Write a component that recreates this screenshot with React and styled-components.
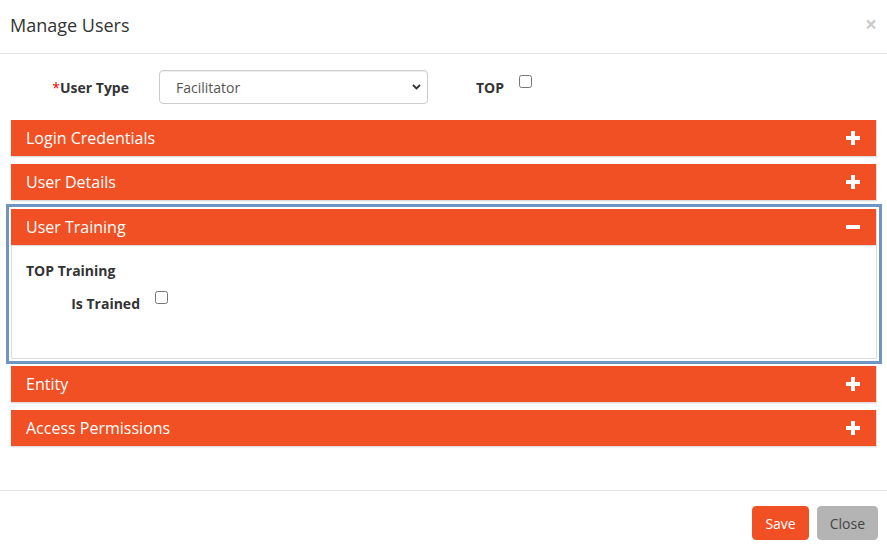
import styled, { createGlobalStyle } from "styled-components";

const ORANGE = "#f05023";

const GlobalStyle = createGlobalStyle`
  html, body {
    margin: 0;
    padding: 0;
    background: #fff;
  }
  body {
    font-family: "Open Sans", "Liberation Sans", sans-serif;
    font-size: 14px;
    color: #333;
  }
  * {
    box-sizing: border-box;
  }
`;

const Modal = styled.div`
  width: 887px;
  display: flex;
  flex-direction: column;
`;

const Header = styled.div`
  display: flex;
  justify-content: space-between;
  align-items: flex-start;
  padding: 12px 10px 15px 10px;
  border-bottom: 1px solid #e5e5e5;
`;

const Title = styled.h4`
  margin: 0;
  font-size: 18px;
  font-weight: 400;
  line-height: 26px;
  color: #333;
`;

const CloseX = styled.button`
  border: 0;
  background: none;
  padding: 0;
  margin-top: 2px;
  font-family: "Open Sans", "Liberation Sans", sans-serif;
  font-size: 21px;
  font-weight: 700;
  line-height: 1;
  color: #000;
  opacity: 0.2;
  cursor: pointer;
`;

const Body = styled.div`
  padding: 16px 10px 43px 11px;
`;

const FieldRow = styled.div`
  display: flex;
  align-items: center;
  height: 34px;
  margin-bottom: 16px;
`;

const FieldLabel = styled.label`
  width: 118px;
  text-align: right;
  font-weight: 700;
  color: #333;
  margin-right: 30px;
  span {
    color: #e00;
    font-weight: 400;
  }
`;

const SelectWrap = styled.div`
  position: relative;
  width: 269px;
  height: 34px;
`;

const Select = styled.select`
  appearance: none;
  width: 100%;
  height: 100%;
  border: 1px solid #ccc;
  border-radius: 4px;
  padding: 0 28px 0 16px;
  font-family: "Open Sans", "Liberation Sans", sans-serif;
  font-size: 14px;
  color: #555;
  background: #fff;
  box-shadow: inset 0 1px 1px rgba(0, 0, 0, 0.075);
`;

const Chevron = styled.svg`
  position: absolute;
  right: 7px;
  top: 14px;
  pointer-events: none;
`;

const InlineLabel = styled.label`
  font-weight: 700;
  color: #333;
  margin-left: 48px;
  margin-right: 15px;
`;

const Checkbox = styled.input.attrs({ type: "checkbox" })`
  width: 13px;
  height: 13px;
  margin: 0;
  align-self: flex-start;
  margin-top: ${(p) => p.$top || 0}px;
`;

const PanelGroup = styled.div`
  display: flex;
  flex-direction: column;
  gap: 7px;
`;

const Panel = styled.div`
  border: 1px solid #ddd;
  border-top: 0;
  border-left: 0;
  background: #fff;
  margin-top: ${(p) => (p.$focused ? "1px" : "0")};
  box-shadow: ${(p) =>
    p.$focused
      ? "0 0 0 2px #fff, 0 0 0 5px #6f95c3"
      : "0 1px 1px rgba(0, 0, 0, 0.05)"};
`;

const PanelHeading = styled.div`
  display: flex;
  align-items: center;
  justify-content: space-between;
  height: 36px;
  padding: 0 16px 1px 15px;
  background: ${ORANGE};
  color: #fff;
  cursor: pointer;
`;

const PanelTitle = styled.span`
  font-size: 16px;
  line-height: 20px;
`;

const PanelBody = styled.div`
  border-top: 1px solid #ddd;
  border-left: 1px solid #ddd;
  padding: 15px 14px 45px 14px;
`;

const SectionTitle = styled.div`
  font-weight: 700;
  line-height: 20px;
  margin-bottom: 12px;
`;

const CheckRow = styled.div`
  display: flex;
  align-items: center;
  height: 20px;
`;

const CheckLabel = styled.label`
  width: 114px;
  text-align: right;
  font-weight: 700;
  margin-right: 15px;
`;

const Footer = styled.div`
  display: flex;
  justify-content: flex-end;
  gap: 8px;
  padding: 15px 9px 12px;
  border-top: 1px solid #e5e5e5;
`;

const Button = styled.button`
  height: 34px;
  padding: 0 12px;
  border: 1px solid ${(p) => (p.$primary ? ORANGE : "#b4b4b4")};
  border-radius: 4px;
  background: ${(p) => (p.$primary ? ORANGE : "#b4b4b4")};
  color: ${(p) => (p.$primary ? "#fff" : "#444")};
  font-family: "Open Sans", "Liberation Sans", sans-serif;
  font-size: 14px;
  cursor: pointer;
`;

const ToggleIcon = ({ open }) => (
  <svg width="14" height="14" viewBox="0 0 14 14" fill="#fff">
    <rect x="0" y="5" width="14" height="4" />
    {!open && <rect x="5" y="0" width="4" height="14" />}
  </svg>
);

const sections = [
  { title: "Login Credentials" },
  { title: "User Details" },
  { title: "User Training", open: true },
  { title: "Entity" },
  { title: "Access Permissions" },
];

const App = () => {
  return (
    <>
      <GlobalStyle />
      <Modal>
        <Header>
          <Title>Manage Users</Title>
          <CloseX aria-label="Close">×</CloseX>
        </Header>
        <Body>
          <FieldRow>
            <FieldLabel>
              <span>*</span>User Type
            </FieldLabel>
            <SelectWrap>
              <Select defaultValue="Facilitator">
                <option>Facilitator</option>
                <option>Administrator</option>
                <option>Trainer</option>
              </Select>
              <Chevron width="9" height="6" viewBox="0 0 9 6">
                <path d="M1 1l3.5 3.5L8 1" fill="none" stroke="#333" strokeWidth="1.8" />
              </Chevron>
            </SelectWrap>
            <InlineLabel>TOP</InlineLabel>
            <Checkbox $top={5} />
          </FieldRow>
          <PanelGroup>
            {sections.map((s) => (
              <Panel key={s.title} $focused={s.open}>
                <PanelHeading>
                  <PanelTitle>{s.title}</PanelTitle>
                  <ToggleIcon open={s.open} />
                </PanelHeading>
                {s.open && (
                  <PanelBody>
                    <SectionTitle>TOP Training</SectionTitle>
                    <CheckRow>
                      <CheckLabel>Is Trained</CheckLabel>
                      <Checkbox $top={-2} />
                    </CheckRow>
                  </PanelBody>
                )}
              </Panel>
            ))}
          </PanelGroup>
        </Body>
        <Footer>
          <Button $primary>Save</Button>
          <Button>Close</Button>
        </Footer>
      </Modal>
    </>
  );
};

export default App;
